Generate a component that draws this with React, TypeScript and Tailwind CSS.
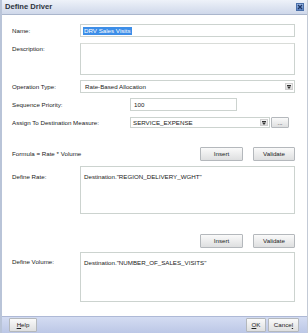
import React from "react";

const font = { fontFamily: '"Liberation Sans", Arial, sans-serif' };

function Btn({ label, className = "" }: { label: React.ReactNode; className?: string }) {
  return (
    <div
      className={
        "flex items-center justify-center border border-[#b4b8bc] bg-gradient-to-b from-[#fafafa] to-[#dedfe0] text-[6.2px] text-[#222] rounded-[1px] " +
        className
      }
    >
      {label}
    </div>
  );
}

function Arrow() {
  return (
    <div className="flex h-[7px] w-[8px] items-center justify-center border border-[#cfcfcf] bg-gradient-to-b from-[#f4f4f4] to-[#dcdcdc]">
      <svg width="4" height="4" viewBox="0 0 4 4">
        <rect x="0" y="0" width="4" height="1" fill="#333" />
        <path d="M0 1.5 L4 1.5 L2 4 Z" fill="#333" />
      </svg>
    </div>
  );
}

export default function App() {
  return (
    <div style={font} className="w-[308px] h-[333px] bg-white flex flex-col border-l-2 border-l-[#b9c4d8] border-r border-r-[#c3cad6] overflow-hidden">
      {/* TITLE BAR */}
      <div className="h-[15px] shrink-0 flex items-center justify-between pl-[3px] pr-[3px] bg-gradient-to-b from-[#eef2f9] to-[#cfd8ea] border-b border-[#aab6cc]">
        <span className="text-[7.6px] font-bold text-[#2d3440]">Define Driver</span>
        <div className="h-[8px] w-[8px] border border-[#4a6fa8] bg-gradient-to-b from-[#9cb8e4] to-[#5d84c4] flex items-center justify-center">
          <svg width="6" height="6" viewBox="0 0 6 6">
            <path d="M1 1 L5 5 M5 1 L1 5" stroke="#1d3563" strokeWidth="1.3" />
          </svg>
        </div>
      </div>

      {/* BODY */}
      <div className="flex-1 flex flex-col pl-[10px] pr-[12px] text-[6.2px] text-[#222]">
        {/* Name */}
        <div className="mt-[9px] flex items-center h-[13px]">
          <span className="w-[68px] shrink-0">Name:</span>
          <div className="flex-1 h-full border border-[#ccd3cf] flex items-center pl-[2px]">
            <span className="bg-[#3d8ee8] text-white px-[1px] leading-[8px]">DRV Sales Visits</span>
          </div>
        </div>

        {/* Description */}
        <div className="mt-[6px] flex h-[32px]">
          <span className="w-[68px] shrink-0 pt-[1px]">Description:</span>
          <div className="flex-1 h-full border border-[#ccd3cf] border-t-[#d9dcd8]" />
        </div>

        {/* Operation Type */}
        <div className="mt-[5px] flex items-center h-[13px]">
          <span className="w-[68px] shrink-0">Operation Type:</span>
          <div className="flex-1 h-full border border-[#ccd3cf] flex items-center justify-between pl-[4px] pr-[1px]">
            <span>Rate-Based Allocation</span>
            <Arrow />
          </div>
        </div>

        {/* Sequence Priority */}
        <div className="mt-[5px] flex items-center h-[13px]">
          <span className="w-[118px] shrink-0">Sequence Priority:</span>
          <div className="w-[107px] h-full border border-[#ccd3cf] flex items-center pl-[3px]">100</div>
        </div>

        {/* Assign To Destination Measure */}
        <div className="mt-[6px] flex items-center h-[11px]">
          <span className="w-[118px] shrink-0">Assign To Destination Measure:</span>
          <div className="w-[140px] h-full border border-[#ccd3cf] flex items-center justify-between pl-[2px] pr-[1px]">
            <span>SERVICE_EXPENSE</span>
            <Arrow />
          </div>
          <Btn label="..." className="ml-[1px] w-[18px] h-[11px]" />
        </div>

        {/* Formula */}
        <div className="mt-[19px] flex items-center h-[14px]">
          <span className="flex-1">Formula = Rate * Volume</span>
          <Btn label="Insert" className="w-[43px] h-[14px]" />
          <Btn label="Validate" className="ml-[10px] w-[42px] h-[14px]" />
        </div>

        {/* Define Rate */}
        <div className="mt-[5px] flex h-[48px]">
          <span className="w-[68px] shrink-0 pt-[6px]">Define Rate:</span>
          <div className="flex-1 h-full border border-[#ccd3cf] pl-[3px] pt-[5px]">Destination."REGION_DELIVERY_WGHT"</div>
        </div>

        {/* Buttons 2 */}
        <div className="mt-[20px] flex justify-end items-center h-[14px]">
          <Btn label="Insert" className="w-[43px] h-[14px]" />
          <Btn label="Validate" className="ml-[10px] w-[42px] h-[14px]" />
        </div>

        {/* Define Volume */}
        <div className="mt-[4px] flex h-[50px]">
          <span className="w-[68px] shrink-0 pt-[5px]">Define Volume:</span>
          <div className="flex-1 h-full border border-[#ccd3cf] pl-[3px] pt-[5px]">Destination."NUMBER_OF_SALES_VISITS"</div>
        </div>
      </div>

      {/* BOTTOM BAR */}
      <div className="h-[17px] shrink-0 flex items-center justify-between pl-[7px] pr-[8px] bg-gradient-to-b from-[#d4dcf2] to-[#bcc7e6] border-t border-[#aeb9d6]">
        <Btn label={<span><u>H</u>elp</span>} className="w-[28px] h-[14px]" />
        <div className="flex gap-[2px]">
          <Btn label={<span><u>O</u>K</span>} className="w-[20px] h-[14px]" />
          <Btn label={<span>Cance<u>l</u></span>} className="w-[31px] h-[14px]" />
        </div>
      </div>
    </div>
  );
}
